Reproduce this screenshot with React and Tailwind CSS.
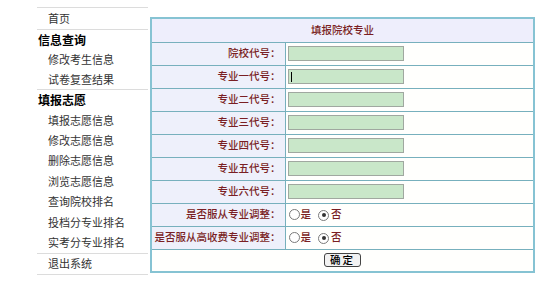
const font = { fontFamily: '"Noto Sans CJK SC", "Noto Sans", sans-serif' }

const infoItems = ['修改考生信息', '试卷复查结果']
const wishItems = ['填报志愿信息', '修改志愿信息', '删除志愿信息', '浏览志愿信息', '查询院校排名', '投档分专业排名', '实考分专业排名']
const codeRows = ['院校代号：', '专业一代号：', '专业二代号：', '专业三代号：', '专业四代号：', '专业五代号：', '专业六代号：']
const radioRows = ['是否服从专业调整：', '是否服从高收费专业调整：']

function Radio({ checked }) {
  return (
    <span className="inline-flex h-[11px] w-[11px] items-center justify-center rounded-full border border-[#7a7a7a] bg-white">
      {checked && <span className="h-[4px] w-[4px] rounded-full bg-[#333]" />}
    </span>
  )
}

function Sidebar() {
  return (
    <div className="w-[111px] border-t border-b border-[#dcdcdc] text-[11px] leading-none text-[#333]">
      <div className="flex h-[22px] items-center border-b border-[#dcdcdc] pl-[11px]">首页</div>
      <div className="border-b border-[#dcdcdc]">
        <div className="flex h-[19px] items-center pl-[1px] text-[12px] font-bold text-black">信息查询</div>
        {infoItems.map((t) => (
          <div key={t} className="flex h-[20px] items-center pl-[11px]">{t}</div>
        ))}
      </div>
      <div className="border-b border-[#dcdcdc]">
        <div className="flex h-[20px] items-center pl-[1px] text-[12px] font-bold text-black">填报志愿</div>
        {wishItems.map((t) => (
          <div key={t} className="flex h-[20.4px] items-center pl-[11px]">{t}</div>
        ))}
      </div>
      <div className="flex h-[20px] items-center pl-[11px]">退出系统</div>
    </div>
  )
}

export default function App() {
  return (
    <div className="h-[287px] w-[558px] bg-white" style={font}>
      <div className="flex items-start pl-[37px] pt-[7px]">
        <Sidebar />
        <table className="ml-[2px] mt-[10px] w-[385px] border-collapse border-2 border-[#86c3d3] text-[10.5px] font-medium leading-none text-[#7a1f24]">
          <tbody>
            <tr className="h-[24px] bg-[#eeeefc]">
              <td colSpan={2} className="border border-[#77b0bd] text-center">填报院校专业</td>
            </tr>
            {codeRows.map((label, i) => (
              <tr key={label} className="h-[23px]">
                <td className="w-[134px] border border-[#77b0bd] bg-[#eef0fb] pr-[4px] text-right">{label}</td>
                <td className="border border-[#77b0bd] bg-[#fffffd] pl-[2px]">
                  <div className="relative h-[15px] w-[116px] border border-[#a0a8a0] bg-[#c9e7c9]">
                    {i === 1 && <span className="absolute left-[2px] top-[2px] h-[10px] w-[1px] bg-black" />}
                  </div>
                </td>
              </tr>
            ))}
            {radioRows.map((label) => (
              <tr key={label} className="h-[23px]">
                <td className="border border-[#77b0bd] bg-[#eef0fb] pr-[4px] text-right whitespace-nowrap">{label}</td>
                <td className="border border-[#77b0bd] bg-[#fffffd] pl-[3px]">
                  <div className="flex items-center">
                    <Radio />
                    <span className="ml-[1px]">是</span>
                    <span className="ml-[7px]"><Radio checked /></span>
                    <span className="ml-[2px]">否</span>
                  </div>
                </td>
              </tr>
            ))}
            <tr className="h-[23px] bg-[#fffffd]">
              <td colSpan={2} className="border border-[#77b0bd] text-center">
                <button className="inline-flex h-[14px] w-[37px] items-center justify-center rounded-[3px] border border-[#444] bg-[#f2f2f2] text-[10.5px] font-medium tracking-[2px] text-black">
                  确定
                </button>
              </td>
            </tr>
          </tbody>
        </table>
      </div>
    </div>
  )
}
